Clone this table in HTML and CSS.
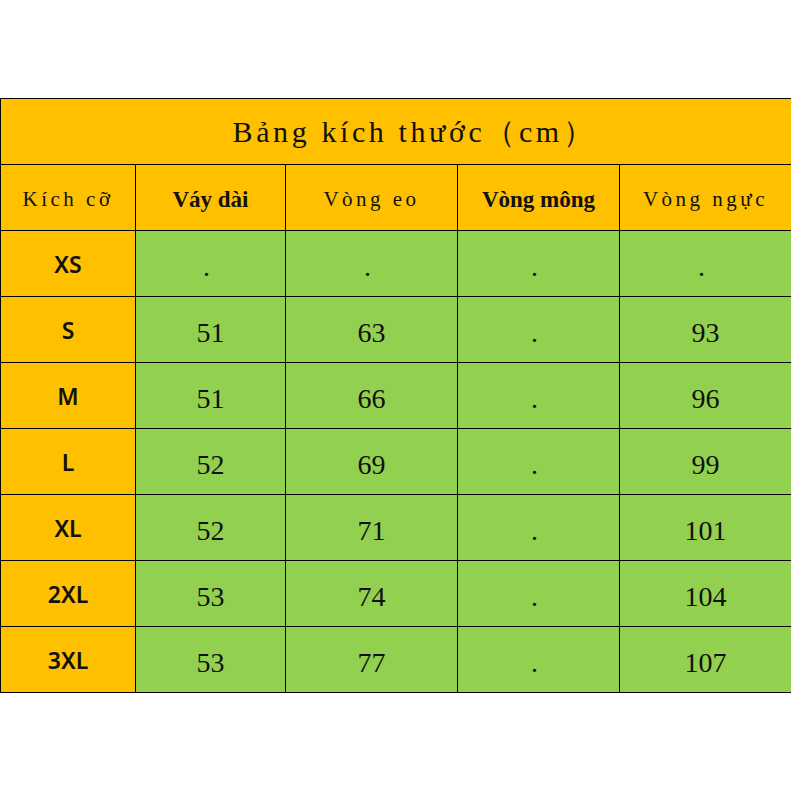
FILE: index.html
```html
<!DOCTYPE html>
<html lang="vi">
<head>
<meta charset="utf-8">
<link rel="stylesheet" href="styles.css">
</head>
<body>
<table class="size-table">
  <colgroup>
    <col class="c1"><col class="c2"><col class="c3"><col class="c4"><col class="c5">
  </colgroup>
  <tr class="title-row"><td colspan="5" class="title">Bảng kích thước（cm）</td></tr>
  <tr class="head-row">
    <td class="h-spaced">Kích cỡ</td>
    <td class="h-bold">Váy dài</td>
    <td class="h-spaced">Vòng eo</td>
    <td class="h-bold">Vòng mông</td>
    <td class="h-spaced">Vòng ngực</td>
  </tr>
  <tr><td class="size">XS</td><td class="val dot">.</td><td class="val dot">.</td><td class="val dot">.</td><td class="val dot">.</td></tr>
  <tr><td class="size">S</td><td class="val">51</td><td class="val">63</td><td class="val dot">.</td><td class="val">93</td></tr>
  <tr><td class="size">M</td><td class="val">51</td><td class="val">66</td><td class="val dot">.</td><td class="val">96</td></tr>
  <tr><td class="size">L</td><td class="val">52</td><td class="val">69</td><td class="val dot">.</td><td class="val">99</td></tr>
  <tr><td class="size">XL</td><td class="val">52</td><td class="val">71</td><td class="val dot">.</td><td class="val">101</td></tr>
  <tr><td class="size">2XL</td><td class="val">53</td><td class="val">74</td><td class="val dot">.</td><td class="val">104</td></tr>
  <tr><td class="size">3XL</td><td class="val">53</td><td class="val">77</td><td class="val dot">.</td><td class="val">107</td></tr>
</table>
</body>
</html>
```
FILE: styles.css
```css
html, body {
  margin: 0;
  padding: 0;
  background: #ffffff;
}
body {
  padding-top: 98px;
  font-family: "Liberation Serif", serif;
}
.size-table {
  border-collapse: collapse;
  table-layout: fixed;
  width: 791px;
}
.c1 { width: 135px; }
.c2 { width: 150px; }
.c3 { width: 172px; }
.c4 { width: 162px; }
.c5 { width: 172px; }
.size-table td {
  border: 1px solid #000;
  height: 65px;
  padding: 0;
  text-align: center;
  vertical-align: middle;
  color: #111;
  background: #92D050;
}
.title-row td, .head-row td, .size-table td.size {
  background: #FFC000;
}
.size-table td.title {
  font-size: 30px;
  letter-spacing: 3.6px;
  padding: 2px 0 0 37px;
  height: 63px;
}
.size-table td.h-spaced,
.size-table td.h-bold {
  padding-top: 4px;
  height: 61px;
}
.h-spaced {
  font-size: 21px;
  letter-spacing: 3.5px;
}
.h-bold {
  font-size: 23px;
  font-weight: bold;
}
.size {
  font-family: "Noto Sans", "Liberation Sans", sans-serif;
  font-size: 23px;
  font-weight: 600;
  color: #111;
}
.size-table td.val {
  font-size: 28px;
  padding-top: 6px;
  height: 59px;
}
.size-table td.dot {
  padding-right: 8px;
}
```
